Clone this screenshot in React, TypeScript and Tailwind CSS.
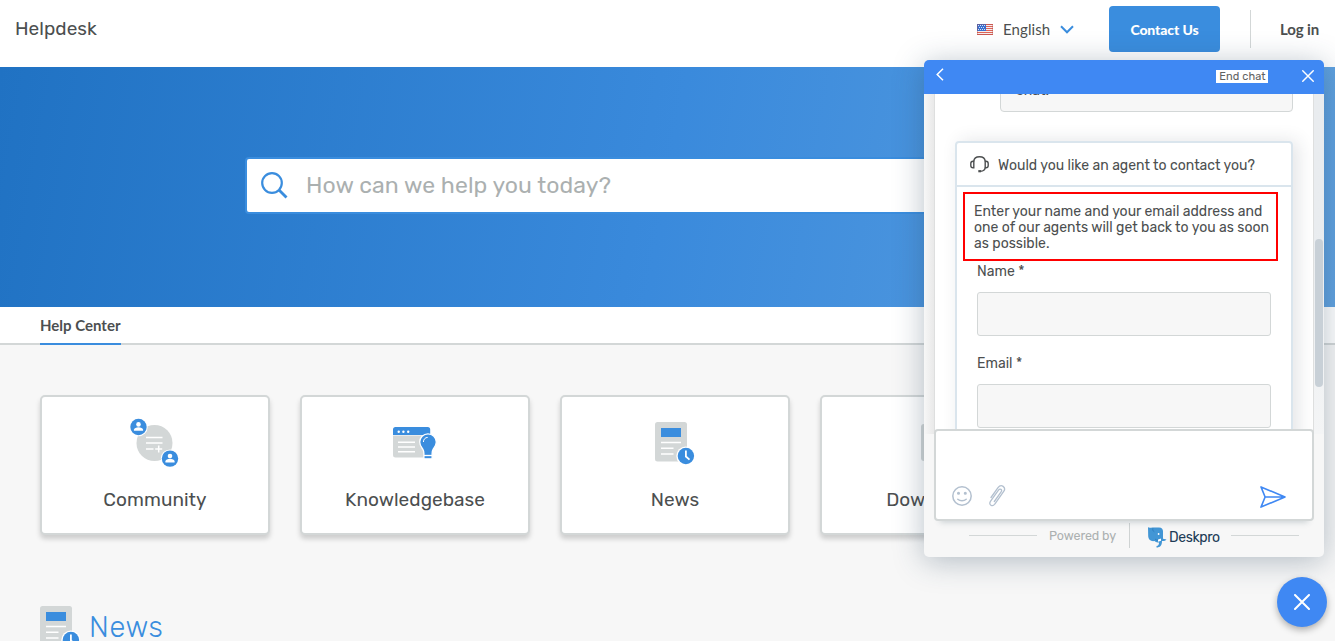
import React from "react";

const rubik = "font-[Rubik,Roboto,sans-serif]";
const lato = "font-[Lato,sans-serif]";

function Person({ x, y }: { x: number; y: number }) {
  return (
    <g transform={`translate(${x} ${y})`}>
      <circle r="9.2" fill="#fff" />
      <circle r="8.2" fill="#3a8dde" />
      <circle cy="-2.6" r="2.3" fill="#fff" />
      <path d="M-4.6 3.8v-1c0-1.8 2.6-2.6 4.6-2.6s4.6.8 4.6 2.6v1z" fill="#fff" />
    </g>
  );
}

function CommunityIcon() {
  return (
    <svg width="50" height="50" viewBox="0 0 50 50">
      <circle cx="24.5" cy="25" r="18" fill="#d3d7d7" />
      <path d="M16 19.5h16.5M16 25h16.5M16 31h7.5M25.2 31h7M28.7 27.5v7" stroke="#fff" strokeWidth="1.5" />
      <Person x={8.5} y={9} />
      <Person x={40} y={40.6} />
    </svg>
  );
}

function KnowledgeIcon() {
  return (
    <svg width="44" height="36" viewBox="0 0 44 36">
      <path d="M0 8.5h37V28a2.500 2.500 0 0 1-2.500 2.500h-32A2.500 2.500 0 0 1 0 28z" fill="#d3d7d7" />
      <path d="M0 8V2.500A2.500 2.500 0 0 1 2.500 0h32.200A2.500 2.500 0 0 1 37.200 2.500V8z" fill="#3a8dde" />
      <path d="M5 15.200h17M5 20h17M5 24.700h17" stroke="#fff" strokeWidth="1.600" />
      <g fill="#fff">
        <circle cx="5.700" cy="4.700" r="1.200" />
        <circle cx="10.400" cy="4.700" r="1.200" />
        <circle cx="15.200" cy="4.700" r="1.200" />
      </g>
      <path
        d="M35 6.800a8.300 8.300 0 0 1 8.300 8.300c0 3.500-2 5.500-3.200 7.200-.8 1.200-1 2.500-1 4.200v5.300h-8.200v-5.300c0-1.700-.2-3-1-4.200-1.200-1.700-3.200-3.700-3.200-7.200A8.300 8.300 0 0 1 35 6.800z"
        fill="#3a8dde" stroke="#fff" strokeWidth="1.300"
      />
      <path d="M31 28.500h8" stroke="#fff" strokeWidth="1.300" />
      <path d="M30.400 15c0-2.600 1.800-4.600 4.300-4.600" fill="none" stroke="#fff" strokeWidth="1" />
    </svg>
  );
}

function NewsIcon() {
  return (
    <svg width="40" height="44" viewBox="0 0 40 44" className="shrink-0">
      <rect width="32" height="39.5" rx="2.5" fill="#d3d7d7" />
      <rect x="6" y="6" width="20" height="9" fill="#3a8dde" />
      <path d="M6 20.5h20M6 26.200h12.500M6 32h12.500" stroke="#fff" strokeWidth="1.600" />
      <circle cx="30.900" cy="34" r="9.600" fill="#fff" />
      <circle cx="30.900" cy="34" r="8.200" fill="#3a8dde" />
      <path d="M30.900 28.500v6l3.600 3.200" fill="none" stroke="#fff" strokeWidth="1.800" />
    </svg>
  );
}

function Flag() {
  return (
    <svg width="16" height="11" viewBox="0 0 16 11">
      <rect width="16" height="11" fill="#f7eeee" />
      <path d="M0 .5h16M0 2.500h16M0 4.500h16M0 6.500h16M0 8.500h16M0 10.500h16" stroke="#df6459" />
      <rect x="0" y="0" width="9" height="7" fill="#3970cf" />
      <path d="M1 1.500h7M2 3.500h6M1 5.500h7" stroke="#d6e1f7" strokeDasharray="1 1" />
      <rect x=".5" y=".5" width="15" height="10" fill="none" stroke="#a34545" strokeOpacity=".35" />
    </svg>
  );
}

function Cross({ size, width }: { size: number; width: number }) {
  return (
    <svg width={size} height={size} viewBox="0 0 16 16" fill="none" stroke="#fff" strokeWidth={width} strokeLinecap="round">
      <path d="M1 1l14 14M15 1L1 15" />
    </svg>
  );
}

function HeaderBar() {
  return (
    <header className={`${lato} flex h-[67px] items-start bg-white text-[#4c4f50]`}>
      <div className={`${rubik} pt-[15px] pl-[15px] text-[19px] leading-[27px] tracking-[0.04px]`}>Helpdesk</div>
      <div className="ml-auto flex pt-[6px]">
        <div className="flex h-[46px] items-center">
          <Flag />
          <span className="ml-[10px] w-[47px] text-[15px] tracking-[0.1px] whitespace-nowrap">English</span>
          <svg className="ml-[10px]" width="14" height="9" viewBox="0 0 14 9" fill="none" stroke="#3a8dde" strokeWidth="2">
            <path d="M1 1.300l6 6 6-6" />
          </svg>
        </div>
        <button className="ml-[35px] h-[46px] w-[111px] rounded-[4px] bg-[#3a8dde] text-[14px] font-black text-white">
          <span className="tracking-[-0.1px]">Contact Us</span>
        </button>
        <div className="mt-[4px] ml-[30px] h-[38px] w-px bg-[#d3d7d7]" />
        <div className="mr-[16px] ml-[29px] flex h-[46px] w-[39px] items-center text-[15px] font-bold tracking-[-0.1px] whitespace-nowrap">Log in</div>
      </div>
    </header>
  );
}

function Tile({ icon, label, spacing }: { icon: React.ReactNode; label: string; spacing: string }) {
  return (
    <div className="flex h-[140px] w-[230px] shrink-0 flex-col items-center rounded-[5px] border-2 border-[#d3d7d7] bg-white shadow-[0_4px_5px_rgba(0,0,0,0.17)]">
      <div className="flex h-[90px] items-start">{icon}</div>
      <div className={`${rubik} text-[19px] leading-[25px] whitespace-nowrap text-[#4c4f50] ${spacing}`}>{label}</div>
    </div>
  );
}

function Field({ label }: { label: string }) {
  return (
    <label className="mb-[19px] block">
      <span className="block h-[28px] text-[14px] leading-[16px]">{label}</span>
      <input className="block h-[44px] w-[294px] rounded-[3px] border border-[#d3d7d7] bg-[#f7f7f7]" />
    </label>
  );
}

function DeskproMark() {
  return (
    <svg width="19" height="21" viewBox="0 0 19 21">
      <path d="M0 .3c2 1 3-.1 5 .1h6c3 0 4 2 4 4v7.300l3.500.800c-1.200 1.600-3.500 1.600-4.300 1.400L14 14c0 4.500-1.800 6.500-5.500 6.500v-1.600c1.800 0 2.500-1.200 2.500-3.500-2 .4-3.500-.2-4.500-1.300-3.500.7-6.300-1.500-6.300-5z" fill="#4296d5" />
      <path d="M5 1.200c-.7 1.500 0 3 1.300 3.600M7 12c1.500 1.800 4.500 1.200 5.500-.2" stroke="#2877b7" strokeWidth=".7" fill="none" />
      <circle cx="10.600" cy="7" r=".9" fill="#fff" />
      <path d="M10 12.500l3-1v2.200l-3 1z" fill="#fff" />
    </svg>
  );
}

function Chat() {
  return (
    <section className={`${rubik} absolute top-[60px] left-[924px] flex h-[497px] w-[400px] flex-col rounded-[5px] bg-[#f7f7f7] text-[#4c4f50] shadow-[0_4px_30px_rgba(45,70,95,0.34)]`}>
      <div className="flex h-[34px] shrink-0 items-center rounded-t-[5px] bg-[#3f88f3] pr-[10px] pl-[12px]">
        <svg className="mb-[5px]" width="8" height="13" viewBox="0 0 8 13" fill="none" stroke="#fff" strokeWidth="1.5">
          <path d="M7 .8L1.200 6.500 7 12.200" />
        </svg>
        <button className="mt-[-2px] ml-auto h-[13px] w-[52px] bg-white pl-px text-[11px] leading-[13px] tracking-[0.1px] text-[#5f6263]">End chat</button>
        <div className="mt-[-2px] ml-[34px]"><Cross size={12} width={1.9} /></div>
      </div>
      <div className="flex h-[340px] shrink-0 overflow-hidden">
        <div className="w-[11px] shrink-0 border-r border-[#dedfdf] bg-linear-to-r from-[#f7f7f7] to-[#e9e9e9]" />
        <div className="flex w-[378px] shrink-0 flex-col overflow-hidden bg-white">
          <div className="mt-[-22px] ml-[65px] h-[40px] w-[293px] shrink-0 rounded-[4px] border border-[#d3d7d7] bg-[#f7f7f7] pt-[9px] pl-[15px] text-[14px] leading-[18px]">chat.</div>
          <div className="mt-[29px] ml-[20px] h-[320px] w-[338px] shrink-0 rounded-[4px] border-2 border-[#dae5ed] shadow-[5px_0_18px_rgba(40,50,60,0.13)]">
            <div className="flex h-[44px] items-center border-b-2 border-[#dae5ed] pl-[13px]">
              <svg width="19" height="17" viewBox="0 0 19 17" fill="none" stroke="#4c4f50" strokeWidth="1.4">
                <path d="M3.700 5.500C4 2.500 6.500.8 9.500.8s5.500 1.700 5.800 4.700M15.300 11.500c-.3 2.200-2 3.700-4.800 3.700" />
                <path d="M3.800 5.300H3A2.200 2.200 0 0 0 .8 7.500v2A2.200 2.200 0 0 0 3 11.700h.8zM15.200 5.300h.8a2.200 2.200 0 0 1 2.200 2.200v2a2.200 2.200 0 0 1-2.200 2.200h-.8z" />
                <path d="M8.300 15.200h2.700" strokeWidth="2.200" />
              </svg>
              <span className="mt-[2px] ml-[9px] text-[14px] whitespace-nowrap">Would you like an agent to contact you?</span>
            </div>
            <div className="mt-[5px] ml-[6px] h-[69px] w-[315px] border-2 border-[#ff0000] pt-[10px] pl-[9px] text-[14px] leading-[16px]">
              <p className="whitespace-nowrap">Enter your name and your email address and</p>
              <p className="whitespace-nowrap">one of our agents will get back to you as soon</p>
              <p className="whitespace-nowrap">as possible.</p>
            </div>
            <div className="mt-[3px] ml-[20px]">
              <Field label="Name *" />
              <div className="pt-px"><Field label="Email *" /></div>
            </div>
          </div>
        </div>
        <div className="flex-1 border-l border-[#dedfdf] bg-linear-to-b from-[#e9ecef] from-40% to-[#f4f5f6]">
          <div className="mt-[145px] ml-px h-[148px] w-[8px] rounded-[4px] bg-[#c8d0d7]" />
        </div>
      </div>
      <div className="z-10 mx-[10px] mt-[-5px] flex h-[92px] shrink-0 items-end rounded-[4px] border-2 border-[#d3d7d7] bg-white px-[16px] pb-[11px] shadow-[0_7px_6px_-6px_rgba(50,80,90,0.25)]">
        <svg className="mb-[2px]" width="20" height="20" viewBox="0 0 20 20" fill="none" stroke="#b3c0cf" strokeWidth="1.5">
          <circle cx="10" cy="10" r="9.2" />
          <path d="M5.800 13.200c2.200 1.900 6.200 1.900 8.400 0" strokeLinecap="round" />
          <circle cx="6.500" cy="7.300" r=".8" fill="#b3c0cf" /><circle cx="13.300" cy="7.300" r=".8" fill="#b3c0cf" />
        </svg>
        <svg className="mb-[1px] ml-[17px]" width="17" height="22" viewBox="0 0 17 22" fill="none" stroke="#b3c0cf" strokeWidth="1.3" strokeLinecap="round">
          <path d="M2 12.500L9 2.700c1.500-2 3.400-2.500 5.100-1.300s2 3 .6 5L5.800 19c-1.200 1.800-2.600 2-3.900 1.200s-1.500-2.300-.3-4L9.500 5.200c.8-1.200 1.700-1.300 2.500-.8s.9 1.400.1 2.500L5.300 16.500" />
        </svg>
        <svg className="mr-[10px] ml-auto" width="26" height="22" viewBox="0 0 26 22" fill="none" stroke="#3f88f3" strokeWidth="1.6" strokeLinejoin="round">
          <path d="M1 .9L25 11 1 21.100 5.100 11zM5.100 11H25" />
        </svg>
      </div>
      <div className="flex flex-1 items-start pt-[2px] pl-[45px]">
        <div className="mt-[12px] h-px w-[68px] bg-[#d3d7d7]" />
        <span className="mt-px ml-[12px] w-[80px] text-[12.5px] leading-[24px] tracking-[-0.1px] whitespace-nowrap text-[#abb0b0]">Powered by</span>
        <div className="h-[25px] w-px bg-[#cfd3d3]" />
        <div className="mt-[4px] ml-[18px]"><DeskproMark /></div>
        <span className="mt-[3px] ml-[2px] w-[62px] text-[14px] leading-[24px] tracking-[-0.4px] text-[#203b56]">Deskpro</span>
        <div className="mt-[12px] h-px w-[68px] bg-[#d3d7d7]" />
      </div>
    </section>
  );
}

export default function App() {
  return (
    <div className="relative h-[641px] w-full overflow-hidden bg-[#f7f7f7]">
      <HeaderBar />
      <div className="flex h-[240px] items-start justify-center bg-linear-[100deg] from-[#2072c3] via-[#3a8adc] via-50% to-[#60a2e0] pt-[90px]">
        <div className="flex h-[57px] w-[845px] items-center rounded-[4px] border-2 border-[#3a8dde] bg-white pl-[14px]">
          <svg width="27" height="27" viewBox="0 0 27 27" fill="none" stroke="#3a8dde" strokeWidth="2.2">
            <circle cx="11" cy="11" r="9.8" /><path d="M18 18l7.500 7.500" strokeWidth="2.800" />
          </svg>
          <span className={`${rubik} ml-[18px] text-[23px] tracking-[0.08px] text-[#abb0b0]`}>How can we help you today?</span>
        </div>
      </div>
      <nav className="flex h-[38px] border-b-2 border-[#d3d7d7] bg-white pl-[40px]">
        <a className={`${lato} h-[38px] w-[81px] border-b-2 border-[#3a8dde] text-[15px] leading-[37px] font-bold whitespace-nowrap text-[#4c4f50]`}>Help Center</a>
      </nav>
      <main className="pt-[50px] pl-[40px]">
        <div className="flex gap-[30px]">
          <Tile icon={<div className="mt-[21px]"><CommunityIcon /></div>} label="Community" spacing="tracking-[0.06px]" />
          <Tile icon={<div className="mt-[30px]"><KnowledgeIcon /></div>} label="Knowledgebase" spacing="tracking-[0.04px]" />
          <Tile icon={<div className="mt-[25px]"><NewsIcon /></div>} label="News" spacing="tracking-[0px]" />
          <Tile icon={<div className="mt-[27px] h-[37px] w-[28px] rounded-[3px] bg-[#d3d7d7]" />} label="Downloads" spacing="tracking-[0px]" />
        </div>
        <div className="mt-[71px] flex h-[35px] items-start">
          <NewsIcon />
          <h2 className={`${rubik} mt-[3px] ml-[9px] text-[29px] leading-[32px] font-light tracking-[0.6px] text-[#3a8dde]`}>
            <span className="relative top-[2px]">News</span>
          </h2>
        </div>
      </main>
      <Chat />
      <button className="absolute top-[577px] left-[1277px] flex size-[50px] items-center justify-center rounded-full bg-[#3f88f3] shadow-[0_3px_7px_rgba(0,0,0,0.3)]">
        <Cross size={16} width={2} />
      </button>
    </div>
  );
}
